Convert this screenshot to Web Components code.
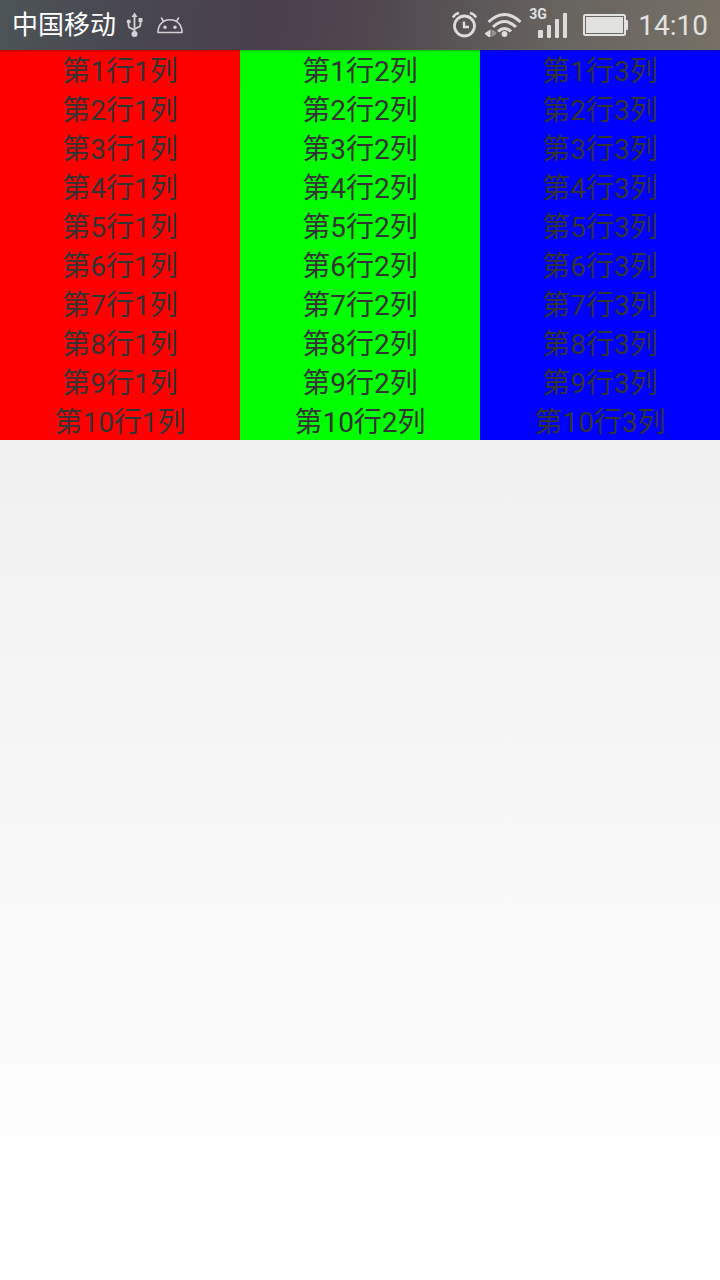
<!DOCTYPE html>
<html lang="zh-CN">
<head>
<meta charset="utf-8">
<meta name="viewport" content="width=device-width, initial-scale=1">
<title>表格</title>
<style>
  html, body { margin: 0; }
  body { font-family: Roboto, "Noto Sans CJK SC", sans-serif; }
</style>
</head>
<body>
<app-screen>
  <status-bar slot="status">
    <span slot="carrier">中国移动</span>
    <status-icon name="usb" slot="left"></status-icon>
    <status-icon name="android" slot="left"></status-icon>
    <status-icon name="alarm" slot="right"></status-icon>
    <status-icon name="wifi" slot="right"></status-icon>
    <signal-meter slot="right">3G</signal-meter>
    <status-icon name="battery" slot="right"></status-icon>
    <time slot="clock">14:10</time>
  </status-bar>
  <color-table rows="10" cols="3"></color-table>
</app-screen>

<script>
class AppScreen extends HTMLElement {
  constructor() {
    super();
    this.attachShadow({ mode: 'open' }).innerHTML = `
      <style>
        :host {
          display: flex; flex-direction: column; min-height: 100vh;
          background: linear-gradient(#e8e8e8, #fff 96%);
        }
        main { flex: 1; }
      </style>
      <slot name="status"></slot>
      <main><slot></slot></main>`;
  }
}

class StatusBar extends HTMLElement {
  constructor() {
    super();
    this.attachShadow({ mode: 'open' }).innerHTML = `
      <style>
        :host {
          display: flex; justify-content: space-between; align-items: center;
          box-sizing: border-box; height: 50px; padding: 0 12px;
          color: #e2e2e1;
          background: linear-gradient(98deg, #4c5456, #484650 20%, #4a3f4d 38%, #50474f 52%, #5a5557 64%, #68645f 78%, #767066);
        }
        .group { display: flex; align-items: center; height: 50px; }
        .left { gap: 10px; }
        .carrier { color: #fff; font-size: 26px; line-height: 50px; }
        .clock { font-size: 28px; line-height: 50px; padding: 2px 0 0 8px; }
      </style>
      <div class="group left">
        <span class="carrier"><slot name="carrier"></slot></span>
        <slot name="left"></slot>
      </div>
      <div class="group right">
        <slot name="right"></slot>
        <span class="clock"><slot name="clock"></slot></span>
      </div>`;
  }
}

const ICONS = {
  usb: [20, 50, `
    <g fill="none" stroke="#d3d1d4" stroke-width="1.8">
      <path d="M8.500 34V16M2.500 22v3.500q0 2 2 2.700l4 1.800M14.500 20.500v4q0 2-2 2.700l-4 1.800"/>
    </g>
    <g fill="#d3d1d4">
      <path d="M8.500 12.500l3 4.500h-6z"/><circle cx="2.700" cy="21.500" r="2"/><path d="M12.500 18h4v4h-4z"/><circle cx="8.500" cy="34" r="3"/>
    </g>`],
  android: [30, 50, `
    <g fill="none" stroke="#d3d1d4" stroke-width="1.6" stroke-linecap="round" stroke-linejoin="round">
      <path d="M2 32.500C2 24 7.500 19.800 14 19.800S26 24 26 32.500Z"/><path d="M7.500 21.300L5.500 18M20.500 21.300l2-3.300"/>
    </g>
    <g fill="#d3d1d4"><circle cx="9" cy="27.300" r="1.700"/><circle cx="19" cy="27.300" r="1.700"/></g>`],
  alarm: [32, 50, `
    <g fill="none" stroke="#dddcdb">
      <circle cx="14.500" cy="26" r="10" stroke-width="2.800"/>
      <path d="M14 21.500V27H19" stroke-width="2.400"/>
      <path d="M3 17.500Q4.500 14 9 13M26 17.500Q24.500 14 20 13" stroke-width="2.600"/>
    </g>`],
  wifi: [46, 50, `
    <g fill="none" stroke="#dddcdb" stroke-width="3">
      <path d="M6.500 22Q22.500 7 38.500 22"/>
      <path d="M11 27Q22.500 16 34 27"/>
      <path d="M16 31.500Q22.500 25.500 29 31.500"/>
    </g>
    <circle cx="22.500" cy="34" r="2.900" fill="#dddcdb"/>
    <path d="M8.500 29.500v7.500h-2l-3.500-3v-1z" fill="#dddcdb"/><path d="M9.500 29.500v7.500q5-2.500 5-4t-5-3.500z" fill="#989391"/>`],
  battery: [50, 50, `
    <rect x="4" y="15" width="41" height="20" rx="1.500" fill="none" stroke="#e2e2e1" stroke-width="2"/>
    <rect x="6" y="17" width="37" height="16" fill="#e2e2e1"/>
    <path d="M45 20h2q1 0 1 1v8q0 1-1 1h-2z" fill="#e2e2e1"/>`]
};

class StatusIcon extends HTMLElement {
  constructor() {
    super();
    this.attachShadow({ mode: 'open' });
  }
  connectedCallback() {
    const [w, h, shapes] = ICONS[this.getAttribute('name')];
    this.shadowRoot.innerHTML = `
      <style>:host { display: block; } svg { display: block; }</style>
      <svg width="${w}" height="${h}" viewBox="0 0 ${w} ${h}" aria-hidden="true">${shapes}</svg>`;
  }
}

class SignalMeter extends HTMLElement {
  constructor() {
    super();
    this.attachShadow({ mode: 'open' }).innerHTML = `
      <style>
        :host { display: flex; align-items: flex-start; width: 52px; height: 50px; position: relative; }
        .label { position: absolute; left: 1px; top: 6px; font-size: 14px; line-height: 16px; font-weight: 700; }
        svg { display: block; }
      </style>
      <span class="label"><slot></slot></span>
      <svg width="52" height="50" viewBox="0 0 52 50" fill="#dddcdb" aria-hidden="true">
        <rect x="10" y="30" width="5" height="8" rx="1"/>
        <rect x="19" y="25" width="4" height="13" rx="1"/>
        <rect x="27" y="19" width="4" height="19" rx="1"/>
        <rect x="35" y="13" width="4" height="25" rx="1"/>
      </svg>`;
  }
}

class ColorTable extends HTMLElement {
  constructor() {
    super();
    this.attachShadow({ mode: 'open' });
  }
  connectedCallback() {
    const rows = Number(this.getAttribute('rows'));
    const cols = Number(this.getAttribute('cols'));
    let body = '';
    for (let r = 1; r <= rows; r++) {
      body += '<tr>';
      for (let c = 1; c <= cols; c++) body += `<td>第${r}行${c}列</td>`;
      body += '</tr>';
    }
    this.shadowRoot.innerHTML = `
      <style>
        :host { display: block; }
        table { width: 100%; table-layout: fixed; border-collapse: collapse; }
        td {
          padding: 5px 0 0; text-align: center;
          font-size: 28px; line-height: 34px; color: #333;
        }
        td:nth-child(1) { background: #f00; }
        td:nth-child(2) { background: #0f0; }
        td:nth-child(3) { background: #00f; }
        tr:first-child td { box-shadow: inset 0 2px 2px -1px rgba(0, 0, 0, .3); }
      </style>
      <table><tbody>${body}</tbody></table>`;
  }
}

customElements.define('app-screen', AppScreen);
customElements.define('status-bar', StatusBar);
customElements.define('status-icon', StatusIcon);
customElements.define('signal-meter', SignalMeter);
customElements.define('color-table', ColorTable);
</script>
</body>
</html>
